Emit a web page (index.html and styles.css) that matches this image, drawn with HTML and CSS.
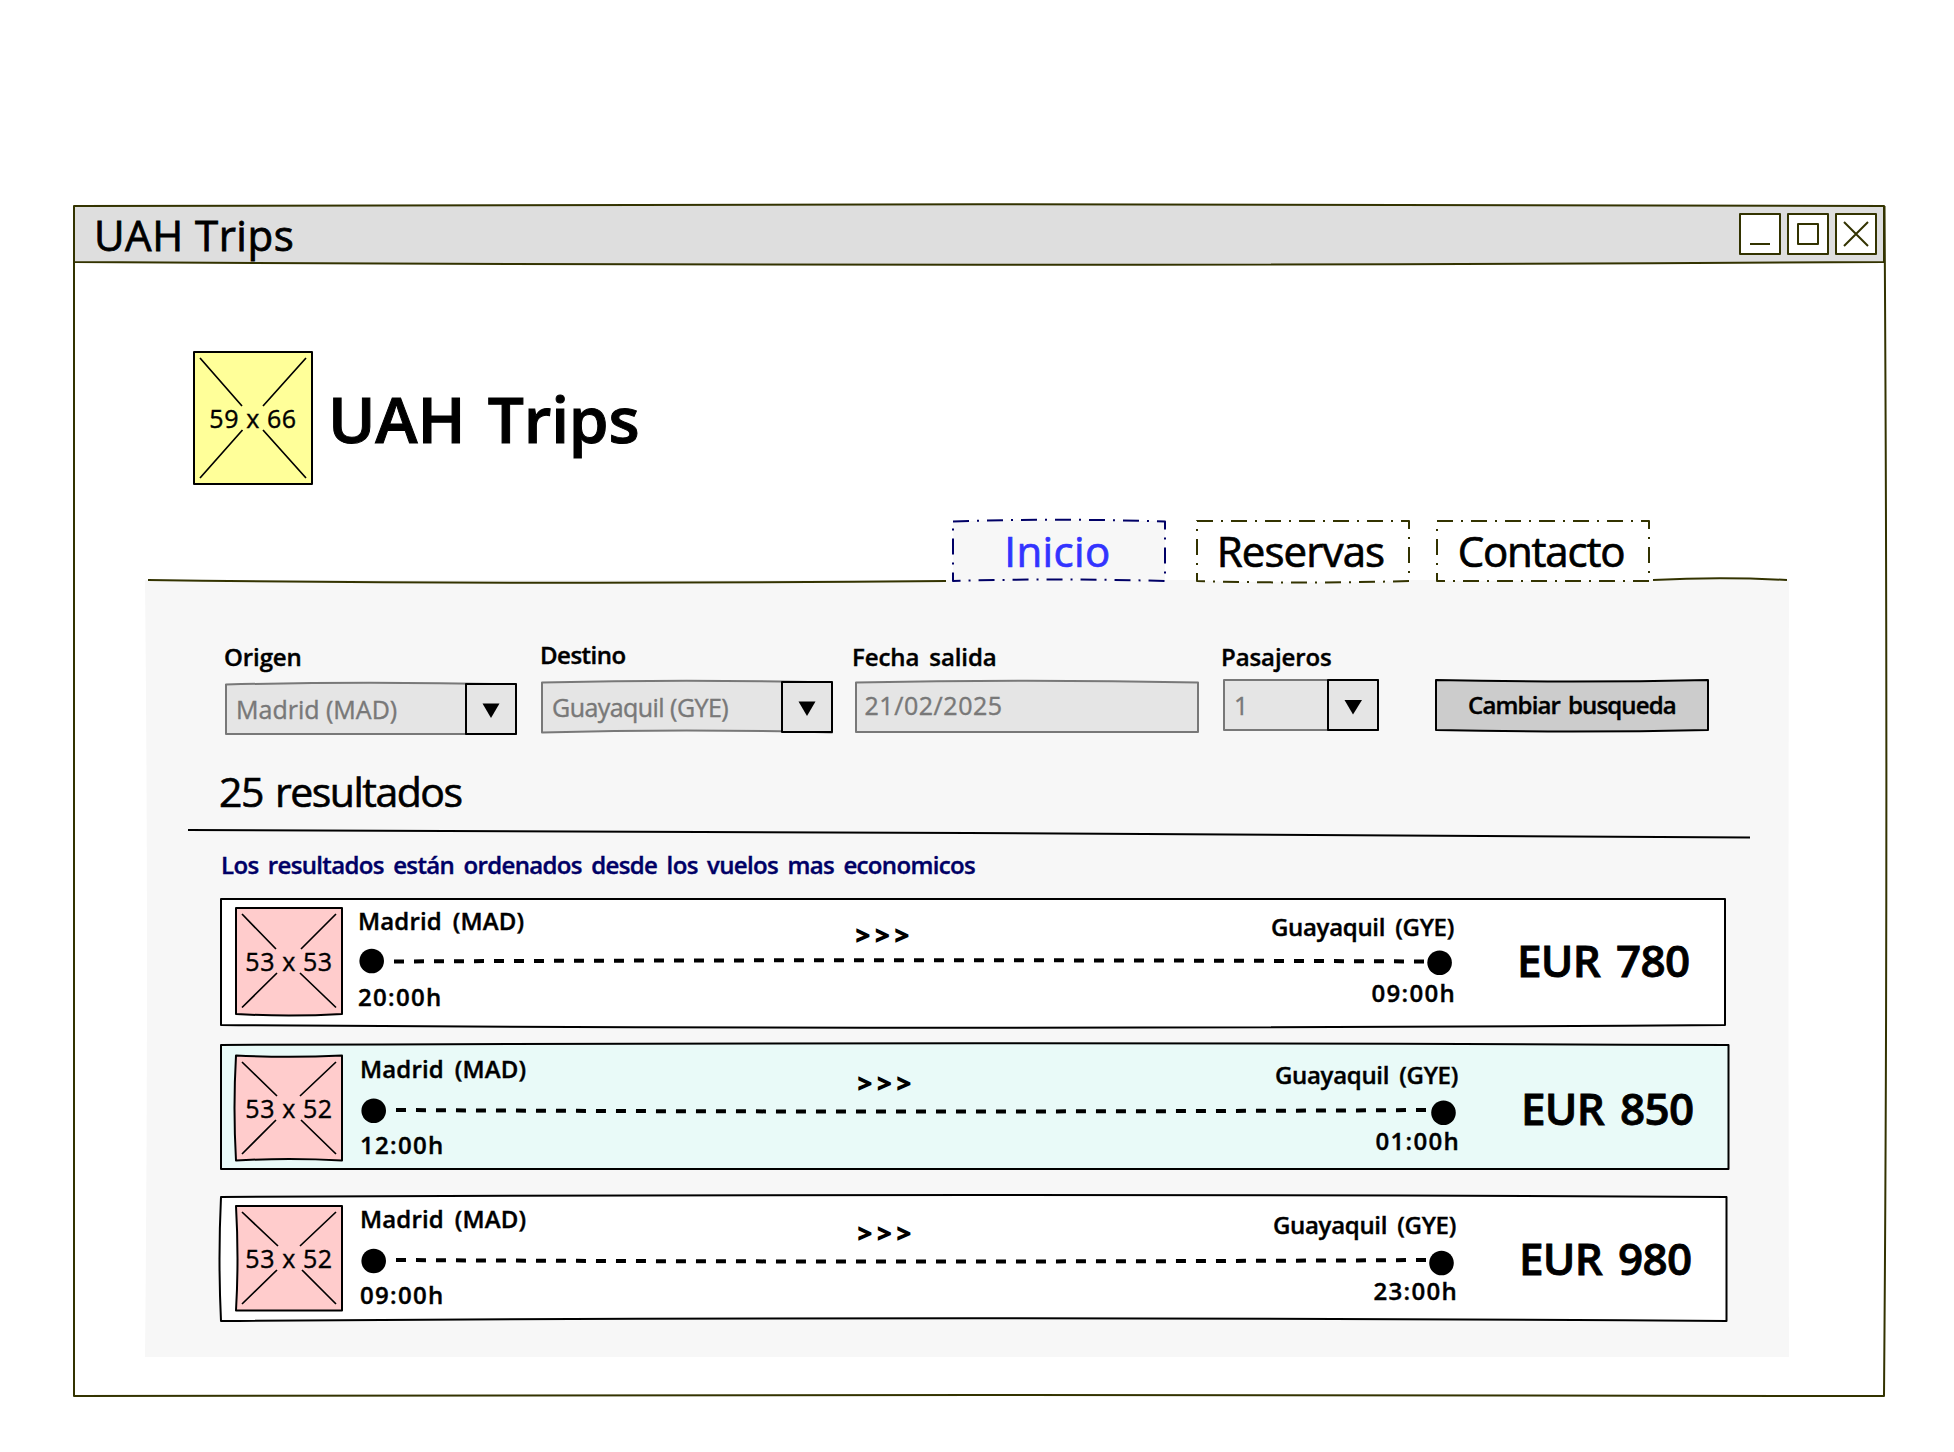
FILE: index.html
```html
<!DOCTYPE html>
<html lang="es">
<head>
<meta charset="utf-8">
<title>UAH Trips</title>
<link rel="stylesheet" href="styles.css">
</head>
<body>
<main class="window stack">
  <svg class="ink ink-olive" width="1812" height="1192"><path d="M1 57V190 M1 57V1191Q906 1189 1811 1191Q1815.500 640 1811.500 1"/></svg>
  <div class="window-body">
    <header class="titlebar stack">
      <svg class="ink ink-olive" width="1812" height="58"><path class="fill-bar" d="M1 1Q906 -2.500 1811 1V57Q906 62.500 1 57Z"/></svg>
      <div class="titlebar-row">
        <span class="window-title">UAH Trips</span>
        <div class="window-buttons">
          <svg class="ink ink-olive" width="42" height="42"><path class="fill-white" d="M1 1H41V41H1Z"/><path d="M11 31H31"/></svg>
          <svg class="ink ink-olive" width="42" height="42"><path class="fill-white" d="M1 1H41V41H1Z"/><path d="M11 11H31V31H11Z"/></svg>
          <svg class="ink ink-olive" width="42" height="42"><path class="fill-white" d="M1 1H41V41H1Z"/><path d="M9 9L33 33M33 9L9 33"/></svg>
        </div>
      </div>
    </header>

    <section class="brand">
      <div class="placeholder stack">
        <svg class="ink" width="120" height="134"><path class="fill-yellow" d="M1 1H119V133H1Z"/><path class="thin" d="M7 7L49 55M113 7L70 55M7 127L49.500 79M113 127L70 79"/></svg>
        <span class="placeholder-text">59 x 66</span>
      </div>
      <h1 class="brand-name">UAH Trips</h1>
    </section>

    <nav class="tabs">
      <svg class="ink ink-olive" width="798" height="2"><path d="M0 1Q400 6 798 2"/></svg>
      <a class="tab tab-first stack">
        <svg class="ink ink-navy" width="214" height="62"><path class="fill-panel dash-dot" d="M1 1.500Q107 -2 213 1.500V61Q107 58 1 61Z"/></svg>
        <span class="tab-text tab-inicio">Inicio</span>
      </a>
      <a class="tab tab-second stack">
        <svg class="ink ink-olive" width="214" height="62"><path class="fill-white dash-dot" d="M1 1H213V61Q107 64 1 61Z"/></svg>
        <span class="tab-text tab-reservas">Reservas</span>
      </a>
      <a class="tab tab-third stack">
        <svg class="ink ink-olive" width="214" height="62"><path class="fill-white dash-dot" d="M1 1H213V61H1Z"/></svg>
        <span class="tab-text tab-contacto">Contacto</span>
      </a>
      <svg class="ink ink-olive" width="134" height="2"><path d="M0 1Q67 -2.500 134 1"/></svg>
    </nav>

    <section class="panel stack">
      <svg class="panel-fill" width="1644" height="778"><path d="M-1 0H1643Q1642 388 1643 777H-1Q3 388 -1 0Z"/></svg>
      <div class="panel-body">
        <form class="search">
          <div class="field field-origen">
            <label class="label">Origen</label>
            <div class="box stack">
              <svg class="ink ink-gray" width="292" height="52"><path class="fill-field" d="M1 1.500Q145 -2 291 1.500V51H1Z"/><path class="ink-black fill-field" d="M241 1H291V51H241Z"/><path class="solid" d="M257.500 20.500H274.500L266 35Z"/></svg>
              <span class="value value-origen">Madrid (MAD)</span>
            </div>
          </div>
          <div class="field field-destino">
            <label class="label label-destino">Destino</label>
            <div class="box stack">
              <svg class="ink ink-gray" width="292" height="52"><path class="fill-field" d="M1 1.500Q145 -2 291 1.500V51.500Q145 47.500 1 51.500Z"/><path class="ink-black fill-field" d="M241 1H291V51H241Z"/><path class="solid" d="M257.500 20.500H274.500L266 35Z"/></svg>
              <span class="value value-destino">Guayaquil (GYE)</span>
            </div>
          </div>
          <div class="field field-fecha">
            <label class="label label-fecha">Fecha salida</label>
            <div class="box stack">
              <svg class="ink ink-gray" width="344" height="52"><path class="fill-field" d="M1 1.500Q172 -2 343 1.500V51H1Z"/></svg>
              <span class="value value-fecha">21/02/2025</span>
            </div>
          </div>
          <div class="field field-pasajeros">
            <label class="label">Pasajeros</label>
            <div class="box stack">
              <svg class="ink ink-gray" width="157" height="52"><path class="fill-field" d="M1 1H155V51H1Z"/><path class="ink-black fill-field" d="M105 1H155V51H105Z"/><path class="solid" d="M121.500 21H139L130 35.500Z"/></svg>
              <span class="value value-pasajeros">1</span>
            </div>
          </div>
          <div class="submit stack">
            <svg class="ink" width="274" height="52"><path class="fill-button" d="M1 1Q137 4 273 1V51Q137 54 1 51Z"/></svg>
            <span class="submit-text">Cambiar busqueda</span>
          </div>
        </form>

        <h2 class="count">25 resultados</h2>
        <svg class="ink divider" width="1562" height="10"><path d="M0 1Q390 1 780 4T1562 8.500"/></svg>
        <p class="note">Los resultados están ordenados desde los vuelos mas economicos</p>

        <article class="card card-780 stack">
          <svg class="ink" width="1507" height="129"><path class="fill-white" d="M1 1H1505V127Q753 132.500 1 127Z"/></svg>
          <div class="card-row">
            <div class="placeholder stack">
              <svg class="ink" width="108" height="108"><path class="fill-pink" d="M1 1H107V107Q54 110 1 107Z"/><path class="thin" d="M7 7L41 42M101 7L66 42M7 100.500L42 66M101 100.500L65 66"/></svg>
              <span class="placeholder-text">53 x 53</span>
            </div>
            <div class="route">
              <div class="places"><span class="place">Madrid (MAD)</span><span class="arrows">&gt;&gt;&gt;</span><span class="place place-to">Guayaquil (GYE)</span></div>
              <svg class="ink track" width="1098" height="26"><circle class="solid" cx="14.700" cy="13" r="12.300"/><path class="dashes" d="M37 13.500Q552 11 1067 13.500"/><circle class="solid" cx="1082.600" cy="14.700" r="12.300"/></svg>
              <div class="times"><span class="time">20:00h</span><span class="time time-to">09:00h</span></div>
            </div>
            <strong class="price">EUR 780</strong>
          </div>
        </article>

        <article class="card card-850 stack">
          <svg class="ink" width="1510" height="126"><path class="fill-mint" d="M1 1Q755 -2.500 1508.500 1V125H1Z"/></svg>
          <div class="card-row">
            <div class="placeholder stack">
              <svg class="ink" width="108" height="107"><path class="fill-pink" d="M1 1.500Q54 4 107 1.500V106.500Q54 103.500 1 106.500Q-2 54 1 1.500Z"/><path class="thin" d="M7 8L42 42M101 8L65 42M7 100L41 66M101 100L66 66"/></svg>
              <span class="placeholder-text">53 x 52</span>
            </div>
            <div class="route">
              <div class="places"><span class="place">Madrid (MAD)</span><span class="arrows">&gt;&gt;&gt;</span><span class="place place-to">Guayaquil (GYE)</span></div>
              <svg class="ink track" width="1100" height="26"><circle class="solid" cx="14.700" cy="14.700" r="12.300"/><path class="dashes" d="M37 14Q552 17 1067.500 14"/><circle class="solid" cx="1084.500" cy="16.700" r="12.300"/></svg>
              <div class="times"><span class="time">12:00h</span><span class="time time-to">01:00h</span></div>
            </div>
            <strong class="price">EUR 850</strong>
          </div>
        </article>

        <article class="card card-980 stack">
          <svg class="ink" width="1508" height="126"><path class="fill-white" d="M1 1Q753 -3 1506.500 1V125Q753 119.500 1 125Q-2 63 1 1Z"/></svg>
          <div class="card-row">
            <div class="placeholder stack">
              <svg class="ink" width="108" height="107"><path class="fill-pink" d="M1 1H107V105.500H1Q4 54 1 1Z"/><path class="thin" d="M7 7L43 41M101 7L65 41M7 99L42 65M101 99L67 65"/></svg>
              <span class="placeholder-text">53 x 52</span>
            </div>
            <div class="route">
              <div class="places"><span class="place">Madrid (MAD)</span><span class="arrows">&gt;&gt;&gt;</span><span class="place place-to">Guayaquil (GYE)</span></div>
              <svg class="ink track" width="1098" height="26"><circle class="solid" cx="14.700" cy="15" r="12.300"/><path class="dashes" d="M37 14Q552 17 1067.500 14"/><circle class="solid" cx="1082.500" cy="17" r="12.300"/></svg>
              <div class="times"><span class="time">09:00h</span><span class="time time-to">23:00h</span></div>
            </div>
            <strong class="price">EUR 980</strong>
          </div>
        </article>
      </div>
    </section>
  </div>
</main>
</body>
</html>
```
FILE: styles.css
```css
* { box-sizing: border-box; }

body {
  margin: 0;
  background: #fff;
  color: #000;
  font: 400 25px/30px "Open Sans", "Noto Sans", sans-serif;
  white-space: nowrap;
  /* thickens the letters to a felt-pen weight */
  -webkit-text-stroke: .4px;
}

h1, h2, p { margin: 0; font-weight: inherit; }

/* A wobbly outline and the content it frames share one grid cell */
.stack { display: grid; }
.stack > * { grid-area: 1 / 1; }

/* Pen strokes */
svg { display: block; overflow: visible; flex: none; }
.ink { fill: none; stroke: #000; stroke-width: 2; stroke-linejoin: round; }
.ink-olive { stroke: #330; }
.ink-navy { stroke: #006; }
.ink-gray { stroke: #787878; }
.ink-black { stroke: #000; }
.thin { stroke-width: 1.7; }
.dash-dot { stroke-dasharray: 16 8 2 8; }
.dashes { stroke-width: 4; stroke-dasharray: 10 10; }
.solid { fill: #000; stroke: none; }
.fill-white { fill: #fff; }
.fill-bar { fill: #dedede; }
.fill-yellow { fill: #ff9; }
.fill-panel { fill: #f7f7f7; }
.fill-field { fill: #e5e5e5; }
.fill-button { fill: #ccc; }
.fill-pink { fill: #fcc; }
.fill-mint { fill: #e9faf8; }

/* Window */
.window { width: 1812px; margin: 205px 0 0 73px; }
.window-body { display: flex; flex-direction: column; }
.titlebar { height: 58px; }
.titlebar-row {
  display: flex;
  align-items: center;
  justify-content: space-between;
  padding: 0 8px 0 21px;
}
.window-title {
  font-size: 42px;
  line-height: 56px;
  letter-spacing: .5px;
  padding-top: 2px;
  -webkit-text-stroke-width: .8px;
}
.window-buttons { display: flex; gap: 6px; }

/* Brand */
.brand {
  display: flex;
  align-items: center;
  gap: 15px;
  height: 134px;
  margin: 88px 0 0 120px;
}
.brand-name {
  font-size: 64px;
  font-weight: 600;
  line-height: 80px;
  letter-spacing: -.2px;
  word-spacing: 6px;
  padding-top: 2px;
  -webkit-text-stroke-width: 1px;
}
.placeholder { align-items: center; justify-items: center; flex: none; }
.placeholder-text { letter-spacing: .6px; }

/* Tabs */
.tabs {
  display: flex;
  align-items: flex-end;
  position: relative;
  z-index: 1;
  height: 61px;
  margin: 35px 0 0 75px;
}
.tab { width: 214px; height: 61px; flex: none; align-items: start; }
.tab-first { margin-left: 6px; }
.tab-second { margin-left: 30px; }
.tab-third { margin: 0 3px 0 26px; }
.tab-text { font-size: 42px; line-height: 62px; text-align: center; -webkit-text-stroke-width: .7px; }
.tab-inicio { color: #33f; letter-spacing: .4px; padding-right: 3px; }
.tab-reservas { letter-spacing: -.9px; padding-right: 5px; }
.tab-contacto { letter-spacing: -1.2px; padding-right: 4px; }

/* Panel */
.panel { width: 1643px; height: 776px; margin-left: 73px; align-items: start; }
.panel-fill { fill: #f7f7f7; margin-top: -1px; }
.panel-body { display: flex; flex-direction: column; padding: 59px 0 0 42px; }

/* Search form */
.search { display: flex; align-items: flex-start; height: 95px; padding-left: 36px; }
.label { display: block; font-size: 24px; font-weight: 600; letter-spacing: -.1px; }
.label-destino { letter-spacing: -.5px; }
.label-fecha { word-spacing: 4px; }
.box { height: 52px; align-items: center; }
.field-origen { width: 293px; padding-top: 2px; }
.field-origen .box { margin: 11px 0 0 1px; }
.field-destino { width: 293px; margin-left: 23px; }
.field-destino .box { margin: 11px 0 0 1px; }
.field-fecha { width: 347px; margin-left: 19px; padding-top: 2px; }
.field-fecha .box { margin: 9px 0 0 3px; }
.field-pasajeros { width: 158px; margin-left: 23px; padding-top: 2px; }
.field-pasajeros .label { margin-left: -1px; }
.field-pasajeros .box { margin: 7px 0 0 1px; }
.value { color: #787878; padding: 0 0 1px 11px; }
.value-destino { letter-spacing: -.55px; }
.value-fecha { letter-spacing: .55px; padding: 0 0 5px 9.5px; }
.submit { width: 274px; height: 52px; margin: 39px 0 0 55px; align-items: center; }
.submit-text {
  font-size: 24px;
  font-weight: 600;
  letter-spacing: -.85px;
  word-spacing: 2.5px;
  text-align: center;
}

/* Results */
.count {
  font-size: 41px;
  line-height: 50px;
  letter-spacing: -1.5px;
  word-spacing: 3px;
  margin: 31px 0 0 31px;
  -webkit-text-stroke-width: .6px;
}
.divider { margin-top: 13px; }
.note {
  margin: 11px 0 18px 33px;
  color: #006;
  font-size: 24px;
  font-weight: 600;
  letter-spacing: -.65px;
  word-spacing: 3.8px;
}

.card { margin-left: 32px; align-items: start; }
.card-780 { height: 129px; }
.card-850 { height: 126px; margin-top: 17px; }
.card-980 { height: 126px; margin-top: 26px; }
.card-row { display: flex; align-items: flex-start; padding: 8px 0 0 15px; }
.card-850 .card-row { padding-top: 10px; }
.card .placeholder { margin-top: 1px; }
.card-850 .placeholder { margin-top: 0; }
.card-780 .placeholder-text, .card-980 .placeholder-text { padding-bottom: 1px; }
.card-850 .placeholder-text { padding-top: 1px; }

.route { width: 1098px; margin-left: 14px; font-size: 24px; font-weight: 600; }
.card-850 .route { width: 1100px; margin-left: 16px; }
.card-980 .route { margin-left: 16px; }
.places { display: grid; grid-template-columns: 499px 1fr auto; height: 42px; align-items: start; }
.place { letter-spacing: .15px; word-spacing: 4.5px; padding-left: 1px; }
.place-to { margin: 6px 1px 0 0; letter-spacing: -.3px; word-spacing: 4.2px; }
.arrows { margin-top: 14px; letter-spacing: 5.8px; -webkit-text-stroke-width: 1.6px; }
.times { display: flex; justify-content: space-between; padding-top: 4px; }
.time { letter-spacing: 1.3px; padding: 4px 0 0 1px; }
.time-to { padding: 0; margin-right: -1px; }
.price {
  margin: 24px 0 0 62px;
  font-size: 44px;
  font-weight: 600;
  line-height: 60px;
  letter-spacing: -.7px;
  word-spacing: 5px;
  -webkit-text-stroke-width: .8px;
}
```
